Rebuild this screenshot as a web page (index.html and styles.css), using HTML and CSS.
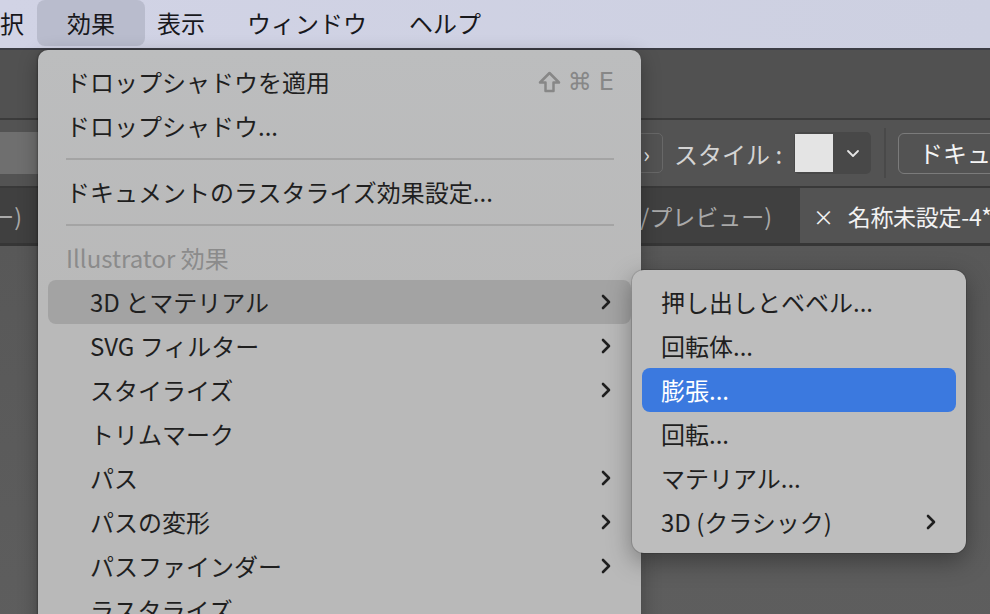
FILE: index.html
```html
<!DOCTYPE html>
<html lang="ja">

<head>
    <meta charset="UTF-8">
    <meta name="viewport" content="width=device-width, initial-scale=1.0">
    <title>効果メニュー</title>
    <link rel="stylesheet" href="styles.css">
</head>

<body>
    <div class="screen">

        <!-- macOS メニューバー -->
        <div class="menubar">
            <span class="mb-item first">択</span>
            <span class="mb-item open">効果</span>
            <span class="mb-item">表示</span>
            <span class="mb-item">ウィンドウ</span>
            <span class="mb-item">ヘルプ</span>
        </div>

        <!-- 後ろのアプリ画面 -->
        <div class="app">
            <div class="appbar"></div>

            <div class="controlbar">
                <div class="field"></div>
                <div class="ctrl-btn">›</div>
                <span class="ctrl-label">スタイル :</span>
                <div class="swatch-box">
                    <span class="swatch"></span>
                    <span class="swatch-drop">
                        <svg width="14" height="9" viewBox="0 0 14 9"><polyline points="2,2 7,7 12,2" fill="none" stroke="#e6e6e6" stroke-width="1.8" stroke-linecap="round" stroke-linejoin="round"/></svg>
                    </span>
                </div>
                <span class="divider"></span>
                <div class="doc-btn">ドキュメント設定</div>
            </div>

            <div class="tabs">
                <div class="tab tab-a">ー)</div>
                <div class="tab tab-b">(CMYK/プレビュー)</div>
                <div class="tab active"><span class="close">×</span>名称未設定-4*</div>
            </div>

            <div class="canvas"></div>
        </div>

        <!-- 効果メニュー -->
        <div class="menu main-menu">
            <div class="row">ドロップシャドウを適用<span class="shortcut"><svg class="shift" width="23" height="22" viewBox="0 0 23 22"><path d="M11.5 2 L21 11.5 L15.5 11.5 L15.5 20 L7.5 20 L7.5 11.5 L2 11.5 Z" /></svg>⌘E</span></div>
            <div class="row">ドロップシャドウ...</div>
            <div class="sep"></div>
            <div class="row">ドキュメントのラスタライズ効果設定...</div>
            <div class="sep"></div>
            <div class="row header">Illustrator 効果</div>
            <div class="row sub hover">3D とマテリアル<span class="chev"><svg width="12" height="16" viewBox="0 0 12 16"><polyline points="3,2 9,8 3,14" /></svg></span></div>
            <div class="row sub">SVG フィルター<span class="chev"><svg width="12" height="16" viewBox="0 0 12 16"><polyline points="3,2 9,8 3,14" /></svg></span></div>
            <div class="row sub">スタイライズ<span class="chev"><svg width="12" height="16" viewBox="0 0 12 16"><polyline points="3,2 9,8 3,14" /></svg></span></div>
            <div class="row sub">トリムマーク</div>
            <div class="row sub">パス<span class="chev"><svg width="12" height="16" viewBox="0 0 12 16"><polyline points="3,2 9,8 3,14" /></svg></span></div>
            <div class="row sub">パスの変形<span class="chev"><svg width="12" height="16" viewBox="0 0 12 16"><polyline points="3,2 9,8 3,14" /></svg></span></div>
            <div class="row sub">パスファインダー<span class="chev"><svg width="12" height="16" viewBox="0 0 12 16"><polyline points="3,2 9,8 3,14" /></svg></span></div>
            <div class="row sub">ラスタライズ</div>
        </div>

        <!-- 3D とマテリアル サブメニュー -->
        <div class="menu submenu">
            <div class="row">押し出しとベベル...</div>
            <div class="row">回転体...</div>
            <div class="row selected">膨張...</div>
            <div class="row">回転...</div>
            <div class="row">マテリアル...</div>
            <div class="row">3D (クラシック)<span class="chev"><svg width="12" height="16" viewBox="0 0 12 16"><polyline points="3,2 9,8 3,14" /></svg></span></div>
        </div>

    </div>
</body>

</html>
```

FILE: styles.css
```css
* {
    margin: 0;
    padding: 0;
    box-sizing: border-box;
}

body {
    width: 990px;
    height: 614px;
    overflow: hidden;
    font-family: "Noto Sans CJK JP", "Noto Sans", sans-serif;
    font-size: 24px;
}

.screen {
    position: relative;
    width: 990px;
    height: 614px;
    overflow: hidden;
    background: #5a5a5a;
}

/* メニューバー */
.menubar {
    display: flex;
    align-items: center;
    height: 50px;
    padding-bottom: 2px;
    background: linear-gradient(90deg, #d1d3e5, #cdd0e1);
    border-bottom: 2px solid #3c3d45;
    color: #18181c;
    white-space: nowrap;
}

.mb-item {
    display: flex;
    align-items: center;
    height: 46px;
    padding: 0 21px;
    line-height: 1;
}

.mb-item.first {
    padding-left: 0;
}

.mb-item.open {
    padding: 0 30px;
    margin: 0 -9px 0 -8px;
    border-radius: 8px;
    background: #b9bccd;
}

/* 背景のアプリ */
.appbar {
    height: 70px;
    background: #515151;
    border-bottom: 2px solid #3b3b3b;
}

.controlbar {
    display: flex;
    align-items: center;
    height: 68px;
    background: #535353;
    border-bottom: 2px solid #393939;
    white-space: nowrap;
    overflow: hidden;
}

.field {
    flex: none;
    width: 300px;
    height: 42px;
    background: #6f6f6f;
}

.ctrl-btn {
    flex: none;
    display: flex;
    align-items: center;
    justify-content: flex-end;
    width: 43px;
    height: 40px;
    margin-left: 320px;
    padding-right: 12px;
    border: 1px solid #686868;
    border-radius: 5px;
    color: #e8e8e8;
    font-size: 22px;
}

.ctrl-label {
    margin-left: 11px;
    color: #d4d4d4;
}

.swatch-box {
    flex: none;
    display: flex;
    align-items: center;
    height: 42px;
    margin-left: 12px;
    padding: 1px;
    border-radius: 5px;
    background: #484848;
}

.swatch {
    width: 38px;
    height: 38px;
    background: #e4e4e4;
}

.swatch-drop {
    display: flex;
    align-items: center;
    justify-content: center;
    width: 35px;
    height: 38px;
    margin-left: 2px;
}

.divider {
    flex: none;
    width: 2px;
    height: 50px;
    margin-left: 13px;
    background: #494949;
}

.doc-btn {
    flex: none;
    height: 41px;
    margin-left: 12px;
    padding: 0 20px;
    border: 1px solid #7b7b7b;
    border-radius: 6px;
    color: #f4f4f4;
    line-height: 38px;
}

.tabs {
    display: flex;
    height: 58px;
    background: #404040;
    border-bottom: 3px solid #363636;
    white-space: nowrap;
}

.tab {
    display: flex;
    align-items: center;
    overflow: hidden;
    color: #a9a9a9;
    font-size: 23px;
}

.tab-a {
    width: 30px;
    justify-content: flex-end;
    padding-right: 8px;
}

.tab-b {
    width: 770px;
    justify-content: flex-end;
    padding-right: 28px;
}

.tab.active {
    flex: 1;
    padding-left: 13px;
    background: #535353;
    color: #f2f2f2;
    font-size: 23px;
    letter-spacing: -0.3px;
}

.close {
    margin-right: 14px;
    font-size: 21px;
}

.canvas {
    height: 400px;
    background: linear-gradient(180deg, #585858, #5e5e5e);
}

/* メニュー */
.menu {
    position: absolute;
    padding: 10px;
    background: #bababa;
    color: #1f1f1f;
    white-space: nowrap;
}

.main-menu {
    top: 50px;
    left: 38px;
    width: 603px;
    height: 620px;
    border-radius: 10px 10px 0 0;
    background: linear-gradient(180deg, #bcbdbe, #b9b9b9 40%);
    box-shadow: -1px 0 2px rgba(0, 0, 0, .25), 0 6px 20px rgba(0, 0, 0, .3);
}

.submenu {
    top: 270px;
    left: 632px;
    width: 334px;
    height: 283px;
    padding: 10px 10px 9px;
    border-radius: 12px;
    background: #bdbdbd;
    box-shadow: 0 0 0 1px rgba(0, 0, 0, .12), 0 8px 24px rgba(0, 0, 0, .35);
}

.row {
    display: flex;
    align-items: center;
    height: 44px;
    padding: 0 18px;
    border-radius: 8px;
    line-height: 1;
}

.row.sub {
    padding-left: 42px;
}

.row.header {
    color: #8b8b8b;
}

.row.hover {
    background: #a3a3a3;
}

.submenu .row {
    padding-left: 19px;
}

.row.selected {
    background: #3b79df;
    color: #ffffff;
}

.shortcut {
    display: flex;
    align-items: center;
    margin-left: auto;
    margin-right: -8px;
    color: #878787;
    font-family: "DejaVu Sans", sans-serif;
    font-size: 24px;
    letter-spacing: 7px;
}

.shift {
    margin-right: 7px;
}

.shift path {
    fill: none;
    stroke: #878787;
    stroke-width: 2.5;
    stroke-linejoin: round;
}

.chev {
    display: flex;
    margin-left: auto;
    margin-right: 1px;
}

.chev polyline {
    fill: none;
    stroke: #1f1f1f;
    stroke-width: 2.6;
    stroke-linecap: round;
    stroke-linejoin: round;
}

.sep {
    height: 2px;
    margin: 10px 17px 10px 18px;
    background: #a4a4a4;
}
```
